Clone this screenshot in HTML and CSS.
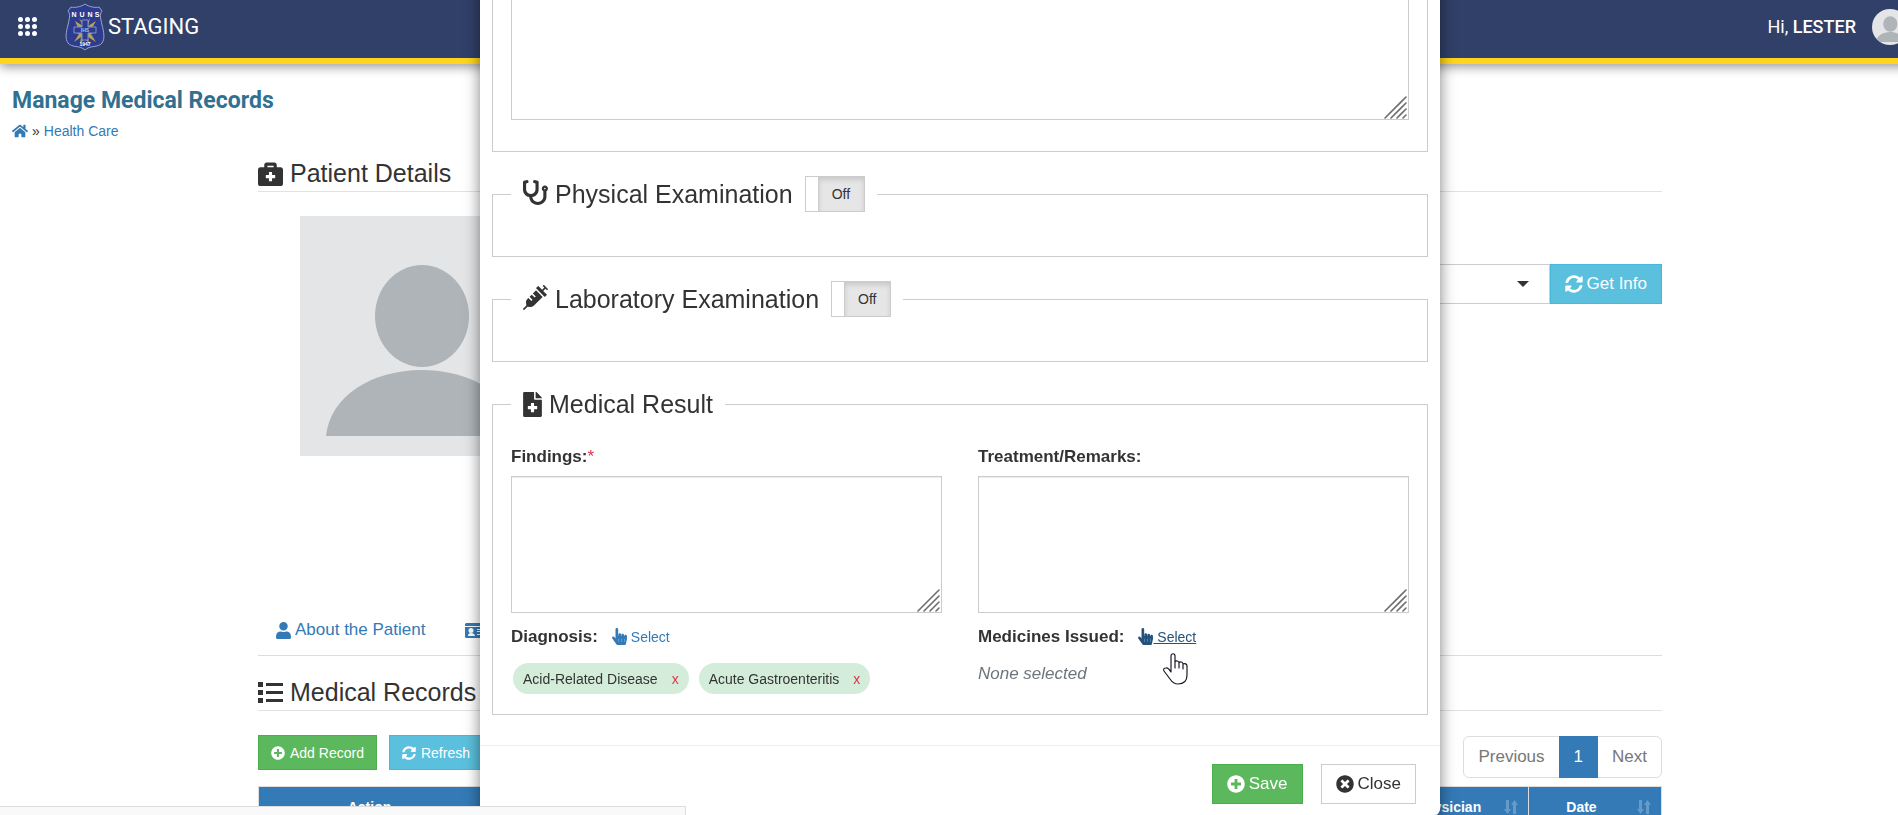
FILE: index.html
```html
<!DOCTYPE html>
<html lang="en">
<head>
    <meta charset="UTF-8">
    <meta name="viewport" content="width=device-width, initial-scale=1.0">
    <title>Manage Medical Records</title>
    <link rel="stylesheet" href="styles.css">
</head>
<body>
    <!-- Shared icons -->
    <svg class="sprite" aria-hidden="true">
        <symbol id="sync" viewBox="0 0 512 512"><path d="M370.72 133.28C339.458 104.008 298.888 87.962 255.848 88c-77.458.068-144.328 53.178-162.791 126.85-1.344 5.363-6.122 9.15-11.651 9.15H24.103c-7.498 0-13.194-6.807-11.807-14.176C33.933 94.924 134.813 8 256 8c66.448 0 126.791 26.136 171.315 68.685L463.03 40.97C478.149 25.851 504 36.559 504 57.941V192c0 13.255-10.745 24-24 24H345.941c-21.382 0-32.09-25.851-16.971-40.971l41.75-41.749zM32 296h134.059c21.382 0 32.09 25.851 16.971 40.971l-41.75 41.75c31.262 29.273 71.835 45.319 114.876 45.28 77.418-.07 144.315-53.144 162.787-126.849 1.344-5.363 6.122-9.15 11.651-9.15h57.304c7.498 0 13.194 6.807 11.807 14.176C478.067 417.076 377.187 504 256 504c-66.448 0-126.791-26.136-171.315-68.685L48.97 471.03C33.851 486.149 8 475.441 8 454.059V320c0-13.255 10.745-24 24-24z"/></symbol>
        <symbol id="plus" viewBox="0 0 512 512"><path d="M256 8C119 8 8 119 8 256s111 248 248 248 248-111 248-248S393 8 256 8zm144 276c0 6.6-5.4 12-12 12h-92v92c0 6.6-5.4 12-12 12h-56c-6.6 0-12-5.4-12-12v-92h-92c-6.6 0-12-5.4-12-12v-56c0-6.6 5.4-12 12-12h92v-92c0-6.6 5.4-12 12-12h56c6.6 0 12 5.4 12 12v92h92c6.6 0 12 5.4 12 12v56z"/></symbol>
        <symbol id="hand" viewBox="0 0 448 512"><path d="M448 240v96c0 3.084-.356 6.159-1.063 9.162l-32 136C410.686 499.23 394.562 512 376 512H168a40.004 40.004 0 0 1-32.35-16.473l-127.997-176c-12.993-17.866-9.043-42.883 8.822-55.876 17.867-12.994 42.884-9.043 55.877 8.823L104 315.992V40c0-22.091 17.908-40 40-40s40 17.909 40 40v200h8v-40c0-22.091 17.908-40 40-40s40 17.909 40 40v40h8v-24c0-22.091 17.908-40 40-40s40 17.909 40 40v24h8c0-22.091 17.908-40 40-40s40 17.909 40 40zm-256 80h-8v96h8v-96zm88 0h-8v96h8v-96zm88 0h-8v96h8v-96z"/></symbol>
        <symbol id="person" viewBox="0 0 240 240"><path fill="#e4e5e7" d="M0 0h240v240H0z"/><ellipse cx="122" cy="100" rx="47" ry="51" fill="#aeb4b8"/><path fill="#aeb4b8" d="M26 220c4-40 46-66 96-66s92 26 95 66z"/></symbol>
        <symbol id="grip" viewBox="0 0 24 24"><path fill="none" stroke="#6e6e6e" stroke-width="1.6" stroke-linecap="round" d="M1 23 22 2M7 23 22 8M13 23l9-9M19 23l3-3"/></symbol>
        <symbol id="sort" viewBox="0 0 16 16"><path d="M3 1h3v9h2l-3.5 5L1 10h2zM10 15V6H8l3.5-5L15 6h-2v9z"/></symbol>
    </svg>

    <div class="page">
        <header class="topbar">
            <button class="apps" type="button" aria-label="Apps">
                <svg width="19" height="19" viewBox="0 0 19 19" fill="#fff">
                    <circle cx="2.5" cy="2.5" r="2.5"/><circle cx="9.5" cy="2.5" r="2.5"/><circle cx="16.5" cy="2.5" r="2.5"/>
                    <circle cx="2.5" cy="9.5" r="2.5"/><circle cx="9.5" cy="9.5" r="2.5"/><circle cx="16.5" cy="9.5" r="2.5"/>
                    <circle cx="2.5" cy="16.5" r="2.5"/><circle cx="9.5" cy="16.5" r="2.5"/><circle cx="16.5" cy="16.5" r="2.5"/>
                </svg>
            </button>
            <svg class="crest" width="40" height="48" viewBox="0 0 40 48">
                <path d="M20 1C16 4 9 5 6 4L3 8c3 4 1 8 0 14-2 7-3 14 0 18 4 5 12 2 17 7 5-5 13-2 17-7 3-4 2-11 0-18-1-6-3-10 0-14l-3-4c-3 1-10 0-14-3z" fill="#2e3c8e" stroke="#98a5d6"/>
                <path d="M10 18l8 5-4-8 6 7 5-7-2 8 8-5-5 9 4 2-4 2 5 8-8-5 1 7-4-6-5 6 1-7-7 5 5-8-5-2 5-2z" fill="#d8bc4a" opacity=".8"/>
                <path d="M17 17h6v7h8v6h-8v7h-6v-7H9v-6h8z" fill="#2e3c8e" stroke="#7d90d0"/>
                <g fill="#fff" font-family="Liberation Sans, sans-serif" font-weight="bold" text-anchor="middle">
                    <text x="9" y="14" font-size="7">N</text><text x="17" y="14" font-size="7">U</text><text x="25" y="14" font-size="7">N</text><text x="32" y="14" font-size="7">S</text>
                    <text x="20" y="29" font-size="5" fill="#aebbe6">IHS</text>
                    <text x="20" y="43" font-size="5">1947</text>
                </g>
            </svg>
            <span class="brand">STAGING</span>
            <span class="greeting">Hi, <b>LESTER</b></span>
            <svg class="avatar"><use href="#person"/></svg>
        </header>

        <main>
            <h1>Manage Medical Records</h1>
            <nav class="crumbs">
                <a href="#" aria-label="Home"><svg width="16" height="14" viewBox="0 24 576 464"><path d="M280.37 148.26L96 300.11V464a16 16 0 0 0 16 16l112.06-.29a16 16 0 0 0 15.92-16V368a16 16 0 0 1 16-16h64a16 16 0 0 1 16 16v95.64a16 16 0 0 0 16 16.05L464 480a16 16 0 0 0 16-16V300L295.67 148.26a12.19 12.19 0 0 0-15.3 0zM571.6 251.47L488 182.56V44.05a12 12 0 0 0-12-12h-56a12 12 0 0 0-12 12v72.61L318.47 43a48 48 0 0 0-61 0L4.34 251.47a12 12 0 0 0-1.6 16.9l25.5 31A12 12 0 0 0 45.15 301l235.22-193.74a12.19 12.19 0 0 1 15.3 0L530.9 301a12 12 0 0 0 16.9-1.6l25.5-31a12 12 0 0 0-1.7-16.93z"/></svg></a>
                <span>»</span>
                <a href="#">Health Care</a>
            </nav>

            <div class="container">
                <h2 class="section-title">
                    <svg width="25" height="25" viewBox="0 0 512 512"><path d="M464 128h-80V80c0-26.5-21.5-48-48-48H176c-26.5 0-48 21.5-48 48v48H48c-26.5 0-48 21.5-48 48v288c0 26.5 21.5 48 48 48h416c26.5 0 48-21.5 48-48V176c0-26.5-21.5-48-48-48zM192 96h128v32H192V96zm160 248c0 4.4-3.6 8-8 8h-56v56c0 4.4-3.6 8-8 8h-48c-4.4 0-8-3.6-8-8v-56h-56c-4.4 0-8-3.6-8-8v-48c0-4.4 3.6-8 8-8h56v-56c0-4.4 3.6-8 8-8h48c4.4 0 8 3.6 8 8v56h56c4.4 0 8 3.6 8 8v48z"/></svg>
                    Patient Details
                </h2>
                <div class="patient">
                    <svg class="photo"><use href="#person"/></svg>
                    <div class="picker">
                        <div class="select-box">
                            <select aria-label="Patient"></select>
                            <svg class="caret" width="12" height="6" viewBox="0 0 12 6"><path d="M0 0h12L6 6z"/></svg>
                        </div>
                        <button class="btn btn-info" type="button"><svg width="18" height="18"><use href="#sync"/></svg>Get Info</button>
                    </div>
                </div>

                <nav class="tabs">
                    <a href="#"><svg width="15" height="17" viewBox="0 0 448 512"><path d="M224 256c70.7 0 128-57.3 128-128S294.7 0 224 0 96 57.3 96 128s57.3 128 128 128zm89.6 32h-16.7c-22.2 10.2-46.9 16-72.9 16s-50.6-5.8-72.9-16h-16.7C60.2 288 0 348.2 0 422.4V464c0 26.5 21.5 48 48 48h352c26.5 0 48-21.5 48-48v-41.6c0-74.2-60.2-134.4-134.4-134.4z"/></svg>About the Patient</a>
                    <a href="#" aria-label="Patient card"><svg width="20" height="15" viewBox="0 0 20 15"><path fill-rule="evenodd" d="M1 0h18l1 1v2H0V1zM0 4h20v10l-1 1H1l-1-1zm6 1a2 2 0 1 0 0 5 2 2 0 0 0 0-5zM3 13h7c0-2-2-3-4-3s-3 1-3 3zM12 6v1h6V6zm0 2v1h6V8zm0 3v1h6v-1z"/></svg></a>
                </nav>

                <h2 class="section-title records-title">
                    <svg width="25" height="21" viewBox="0 0 25 21"><path d="M0 0h5v5H0zM8 1h17v3H8zM0 8h5v5H0zM8 9h17v3H8zM0 16h5v5H0zM8 17h17v3H8z"/></svg>
                    Medical Records
                </h2>
                <div class="toolbar">
                    <button class="btn btn-sm btn-success" type="button"><svg width="14" height="14"><use href="#plus"/></svg>Add Record</button>
                    <button class="btn btn-sm btn-info" type="button"><svg width="14" height="14"><use href="#sync"/></svg>Refresh</button>
                    <nav class="pagination">
                        <a href="#">Previous</a>
                        <a href="#" class="active">1</a>
                        <a href="#">Next</a>
                    </nav>
                </div>
                <table class="records">
                    <thead>
                        <tr>
                            <th class="col-action">Action</th>
                            <th></th>
                            <th class="col-sort"><span>Physician</span><svg width="16" height="16"><use href="#sort"/></svg></th>
                            <th class="col-sort"><span>Date</span><svg width="16" height="16"><use href="#sort"/></svg></th>
                        </tr>
                    </thead>
                </table>
            </div>
        </main>
    </div>

    <!-- Record form, scrolled to its end -->
    <div class="overlay">
        <form class="modal">
            <div class="modal-body">
                <fieldset class="history">
                    <div class="area"><textarea aria-label="Notes"></textarea><svg class="grip"><use href="#grip"/></svg></div>
                </fieldset>

                <fieldset class="exam">
                    <legend>
                        <svg width="25" height="25" viewBox="0 0 512 512"><path d="M447.1 112c-34.2.5-62.3 28.4-63 62.6-.5 24.3 12.5 45.6 32 56.8V344c0 57.3-50.2 104-112 104-60 0-109.2-44.1-111.9-99.2C265 333.8 320 269.2 320 192V36.6c0-11.4-8.1-21.3-19.3-23.5L237.8.5c-13-2.6-25.6 5.8-28.2 18.8L206.4 35c-2.6 13 5.8 25.6 18.8 28.2l30.7 6.1v121.4c0 52.9-42.2 96.7-95.1 97.2-53.4.5-96.9-42.7-96.9-96V69.4l30.7-6.1c13-2.6 21.4-15.2 18.8-28.2l-3.1-15.7C107.7 6.4 95.1-2 82.1.6L19.3 13C8.1 15.3 0 25.1 0 36.6V192c0 77.3 55.1 142 128.1 156.8C130.7 439.2 208.6 512 304 512c97 0 176-75.4 176-168V231.4c19.1-11.1 32-31.7 32-55.4 0-35.7-29.2-64.5-64.9-64zm.9 80c-8.8 0-16-7.2-16-16s7.2-16 16-16 16 7.2 16 16-7.2 16-16 16z"/></svg>
                        <label for="physical">Physical Examination</label>
                        <span class="toggle"><input type="checkbox" id="physical"><span class="off">Off</span></span>
                    </legend>
                </fieldset>

                <fieldset class="exam">
                    <legend>
                        <svg width="25" height="25" viewBox="0 0 512 512"><path d="M201.5 174.8l55.7 55.8c3.1 3.1 3.1 8.2 0 11.3l-11.3 11.3c-3.1 3.1-8.2 3.1-11.3 0l-55.7-55.8-45.3 45.3 55.8 55.8c3.1 3.1 3.1 8.2 0 11.3l-11.3 11.3c-3.1 3.1-8.2 3.1-11.3 0L111 265.2l-26.4 26.4c-17.3 17.3-25.6 41.1-23 65.4l7.1 63.6L2.3 487c-3.1 3.1-3.1 8.2 0 11.3l11.3 11.3c3.1 3.1 8.2 3.1 11.3 0l66.3-66.3 63.6 7.1c23.9 2.6 47.9-5.4 65.4-23l181.9-181.9-135.7-135.7-64.9 65zm308.2-93.3L430.5 2.3c-3.1-3.1-8.2-3.1-11.3 0l-11.3 11.3c-3.1 3.1-3.1 8.2 0 11.3l28.3 28.3-45.3 45.3-56.6-56.6-17-17c-3.1-3.1-8.2-3.1-11.3 0l-33.9 33.9c-3.1 3.1-3.1 8.2 0 11.3l17 17L424.8 223l17 17c3.1 3.1 8.2 3.1 11.3 0l33.9-34c3.1-3.1 3.1-8.2 0-11.3l-73.5-73.5 45.3-45.3 28.3 28.3c3.1 3.1 8.2 3.1 11.3 0l11.3-11.3c3.1-3.2 3.1-8.2 0-11.4z"/></svg>
                        <label for="laboratory">Laboratory Examination</label>
                        <span class="toggle"><input type="checkbox" id="laboratory"><span class="off">Off</span></span>
                    </legend>
                </fieldset>

                <fieldset class="result">
                    <legend>
                        <svg width="19" height="25" viewBox="0 0 384 512"><path d="M377 105L279.1 7c-4.5-4.5-10.6-7-17-7H256v128h128v-6.1c0-6.3-2.5-12.4-7-16.9zm-153 31V0H24C10.7 0 0 10.7 0 24v464c0 13.3 10.7 24 24 24h336c13.3 0 24-10.7 24-24V160H248c-13.2 0-24-10.8-24-24zm64 160v48c0 4.4-3.6 8-8 8h-56v56c0 4.4-3.6 8-8 8h-48c-4.4 0-8-3.6-8-8v-56h-56c-4.4 0-8-3.6-8-8v-48c0-4.4 3.6-8 8-8h56v-56c0-4.4 3.6-8 8-8h48c4.4 0 8 3.6 8 8v56h56c4.4 0 8 3.6 8 8z"/></svg>
                        Medical Result
                    </legend>
                    <div class="columns">
                        <div>
                            <label class="field-label" for="findings">Findings:<span class="required">*</span></label>
                            <div class="area"><textarea id="findings"></textarea><svg class="grip"><use href="#grip"/></svg></div>
                            <div class="pick-row">
                                <b>Diagnosis:</b>
                                <a href="#"><svg width="15" height="17"><use href="#hand"/></svg> Select</a>
                            </div>
                            <div class="chips">
                                <span class="chip">Acid-Related Disease<button type="button" aria-label="Remove Acid-Related Disease">x</button></span>
                                <span class="chip">Acute Gastroenteritis<button type="button" aria-label="Remove Acute Gastroenteritis">x</button></span>
                            </div>
                        </div>
                        <div>
                            <label class="field-label" for="remarks">Treatment/Remarks:</label>
                            <div class="area"><textarea id="remarks"></textarea><svg class="grip"><use href="#grip"/></svg></div>
                            <div class="pick-row">
                                <b>Medicines Issued:</b>
                                <a href="#" class="hovered"><svg width="15" height="17"><use href="#hand"/></svg> Select</a>
                                <svg class="pointer" width="27" height="34" viewBox="0 0 27 34"><path d="M9 20V4c0-3 4-3 4 0v6c1-2 4-1 4 1 1-2 4-1 4 1 2-1 4 0 4 2v9c0 6-3 9-9 9-4 0-6-2-8-5l-6-8c-1-2 0-3 2-3 2-1 3 1 5 4zM13 10v6M17 11v5M21 12v5" fill="#fff" stroke="#1b1b28" stroke-width="1.2" stroke-linejoin="round" stroke-linecap="round"/></svg>
                            </div>
                            <p class="none">None selected</p>
                        </div>
                    </div>
                </fieldset>
            </div>
            <div class="modal-footer">
                <button class="btn btn-success" type="button"><svg width="18" height="18"><use href="#plus"/></svg>Save</button>
                <button class="btn btn-default" type="button"><svg width="18" height="18" viewBox="0 0 512 512"><path d="M256 8C119 8 8 119 8 256s111 248 248 248 248-111 248-248S393 8 256 8zm121.6 313.1c4.7 4.7 4.7 12.3 0 17L338 377.6c-4.7 4.7-12.3 4.7-17 0L256 312l-65.1 65.6c-4.7 4.7-12.3 4.7-17 0L134.4 338c-4.7-4.7-4.7-12.3 0-17l65.6-65-65.6-65.1c-4.7-4.7-4.7-12.3 0-17l39.6-39.6c4.7-4.7 12.3-4.7 17 0l65 65.7 65.1-65.6c4.7-4.7 12.3-4.7 17 0l39.6 39.6c4.7 4.7 4.7 12.3 0 17L312 256l65.6 65.1z"/></svg>Close</button>
            </div>
        </form>
    </div>

    <div class="link-status"></div>
</body>
</html>
```

FILE: styles.css
```css
* {
    box-sizing: border-box;
}
body {
    margin: 0;
    height: 100vh;
    overflow: hidden;
    font-family: "Liberation Sans", Arial, sans-serif;
    font-size: 17px;
    line-height: 22px;
    color: #333;
    background: #fff;
}
svg {
    fill: currentColor;
    flex-shrink: 0;
}
a {
    color: #337ab7;
    text-decoration: none;
}
button, select, textarea {
    font: inherit;
    color: inherit;
}
.sprite {
    display: none;
}

/* Page runs under the right edge of the window */
.page {
    margin-right: -22px;
}
.topbar {
    display: flex;
    align-items: center;
    height: 64px;
    padding: 0 12px 5px 18px;
    background: #314068;
    border-bottom: 6px solid #ffd51c;
    box-shadow: 0 3px 10px rgba(0, 0, 0, .4);
    color: #fff;
    font-family: Roboto, sans-serif;
}
.apps {
    display: flex;
    padding: 0;
    margin-right: 28px;
    border: 0;
    background: none;
}
.brand {
    margin-left: 3px;
    font-size: 22px;
}
.greeting {
    margin-left: auto;
    font-size: 18px;
}
.greeting b {
    font-weight: 500;
}
.avatar {
    width: 36px;
    height: 36px;
    margin-left: 16px;
    border-radius: 50%;
}
main {
    padding: 20px 12px 0;
}
h1 {
    margin: 0;
    font-family: Roboto, sans-serif;
    font-size: 23px;
    font-weight: bold;
    line-height: 34px;
    color: #31708f;
}
.crumbs {
    display: flex;
    align-items: center;
    gap: 4px;
    margin-top: 2px;
    font-size: 14px;
}
.crumbs svg {
    display: block;
}
.container {
    max-width: 1404px;
    margin: 0 auto;
}
.section-title {
    display: flex;
    align-items: center;
    gap: 7px;
    margin: 17px 0 24px;
    padding-bottom: 4px;
    border-bottom: 1px solid #e2e2e2;
    font-size: 25px;
    font-weight: normal;
    line-height: 28px;
}
.patient {
    display: flex;
    justify-content: space-between;
    align-items: flex-start;
    min-height: 389px;
    padding: 0 0 0 42px;
}
.photo {
    width: 240px;
    height: 240px;
}
.picker {
    display: flex;
    width: 50%;
    margin-top: 48px;
}
.select-box {
    position: relative;
    flex: 1;
}
.select-box select {
    width: 100%;
    height: 40px;
    border: 1px solid #ccc;
    background: #fff;
    appearance: none;
}
.caret {
    position: absolute;
    top: 17px;
    right: 21px;
}
.tabs {
    display: flex;
    gap: 40px;
    padding: 14px 18px;
    border-bottom: 1px solid #ddd;
}
.tabs a {
    display: flex;
    align-items: center;
    gap: 4px;
}
.records-title {
    margin-top: 22px;
}
.btn {
    display: flex;
    align-items: center;
    gap: 4px;
    height: 40px;
    padding: 0 14px;
    border: 1px solid #ccc;
    background: #fff;
    white-space: nowrap;
}
.btn-sm {
    gap: 5px;
    height: 35px;
    padding: 0 12px;
    font-size: 14px;
}
.btn-success {
    color: #fff;
    background: #5cb85c;
    border-color: #4cae4c;
}
.btn-info {
    color: #fff;
    background: #5bc0de;
    border-color: #46b8da;
}
.toolbar {
    display: flex;
    align-items: flex-start;
    gap: 12px;
}
.pagination {
    display: flex;
    margin: 1px 0 8px auto;
    border: 1px solid #ddd;
    border-radius: 6px;
}
.pagination a {
    padding: 9px 14px;
    color: #777;
}
.pagination .active {
    margin: -1px 0;
    padding: 10px 15px;
    color: #fff;
    background: #337ab7;
}
.records {
    width: 100%;
    table-layout: fixed;
    border-collapse: collapse;
    font-size: 14px;
    color: #fff;
    background: #337ab7;
}
.records th {
    height: 41px;
    padding: 0 5px;
    border: 1px solid #ddd;
}
.col-action {
    width: 222px;
}
.records .col-sort {
    position: relative;
    width: 133px;
    padding-right: 32px;
}
.col-sort svg {
    position: absolute;
    right: 9px;
    top: 12px;
    opacity: .25;
}

/* Modal */
.overlay {
    position: fixed;
    inset: 0 -22px 0 0;
    display: flex;
    flex-direction: column;
    justify-content: flex-end;
    align-items: center;
    overflow: hidden;
}
.modal {
    width: 50%;
    background: #fff;
    border-radius: 6px;
    box-shadow: 0 5px 15px rgba(0, 0, 0, .5);
}
.modal-body {
    display: flex;
    flex-direction: column;
    gap: 22px;
    padding: 12px 12px 30px;
}
fieldset {
    min-width: 0;
    margin: 0;
    padding: 0 18px;
    border: 1px solid #ccc;
}
legend {
    display: flex;
    align-items: center;
    gap: 7px;
    height: 40px;
    padding: 0 12px;
    font-size: 25px;
}
.history {
    padding: 18px 18px 31px;
}
.exam {
    padding-bottom: 42px;
}
.exam legend > svg {
    margin-bottom: 4px;
}
.result {
    padding-top: 22px;
    padding-bottom: 20px;
}
.toggle {
    position: relative;
    display: flex;
    width: 60px;
    height: 36px;
    margin-left: 5px;
    border: 1px solid #ccc;
    background: #fff;
    font-size: 14px;
}
.toggle input {
    position: absolute;
    inset: 0;
    width: 100%;
    height: 100%;
    margin: 0;
    opacity: 0;
}
.off {
    flex: 1;
    margin-left: 12px;
    padding-left: 13px;
    border-left: 1px solid #ccc;
    background: #e6e6e6;
    box-shadow: inset 0 3px 5px rgba(0, 0, 0, .125);
    line-height: 34px;
}
.columns {
    display: grid;
    grid-template-columns: 1fr 1fr;
    gap: 36px;
}
.field-label {
    display: block;
    margin-bottom: 8px;
    font-weight: bold;
}
.required {
    color: #dc3545;
    font-weight: normal;
}
.area {
    position: relative;
}
.area textarea {
    display: block;
    width: 100%;
    height: 137px;
    padding: 6px 12px;
    border: 1px solid #ccc;
    box-shadow: inset 0 1px 1px rgba(0, 0, 0, .075);
    resize: none;
}
.history .area textarea {
    height: 180px;
}
.grip {
    position: absolute;
    right: 1px;
    bottom: 1px;
    width: 24px;
    height: 24px;
}
.pick-row {
    position: relative;
    display: flex;
    align-items: baseline;
    gap: 14px;
    height: 22px;
    margin: 13px 0 15px;
}
.pick-row a {
    font-size: 14px;
}
.pick-row a svg {
    vertical-align: -3px;
}
.pick-row .hovered {
    color: #23527c;
    text-decoration: underline;
}
.pointer {
    position: absolute;
    left: 184px;
    top: 26px;
}
.chips {
    display: flex;
    gap: 10px;
    padding-left: 2px;
}
.chip {
    display: flex;
    align-items: center;
    height: 31px;
    padding: 0 10px;
    border-radius: 16px;
    background: #d4edda;
    font-size: 14px;
}
.chip button {
    padding: 0;
    margin-left: 14px;
    border: 0;
    background: none;
    color: #dc3545;
}
.none {
    margin: 0;
    font-style: italic;
    color: #6c757d;
}
.modal-footer {
    display: flex;
    justify-content: flex-end;
    gap: 18px;
    padding: 18px 24px 11px;
    border-top: 1px solid #eee;
}

/* Browser link bubble */
.link-status {
    position: fixed;
    left: 0;
    bottom: 0;
    width: 686px;
    height: 9px;
    border: 1px solid #ddd;
    border-width: 1px 1px 0 0;
    background: #f9f9f9;
}
```
